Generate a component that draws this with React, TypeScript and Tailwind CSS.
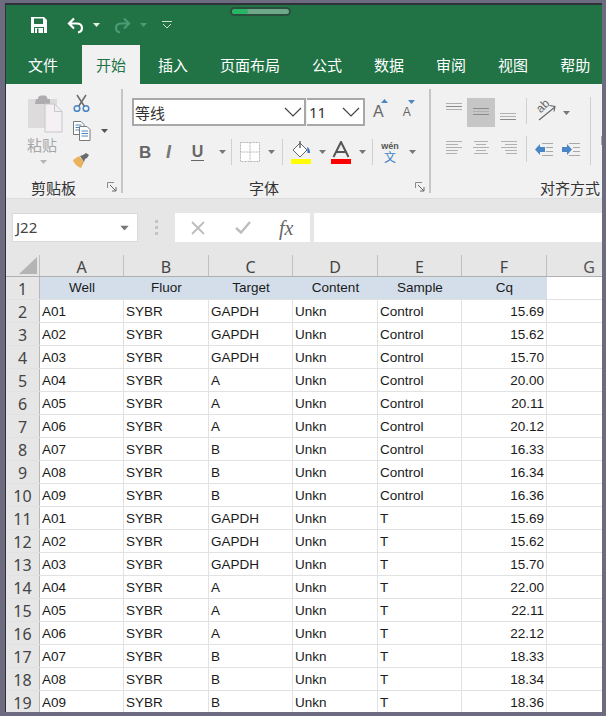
import React from "react";

const CJK = '"Noto Sans CJK SC", "Noto Sans", sans-serif';

function Caret({ c = "#5a5a5a", className = "" }: { c?: string; className?: string }) {
  return (
    <svg width="7" height="4" viewBox="0 0 7 4" className={className}>
      <path d="M0 0h7L3.5 4z" fill={c} />
    </svg>
  );
}
function Chevron() {
  return (
    <svg width="18" height="10" viewBox="0 0 18 10">
      <path d="M1 1l8 8 8-8" fill="none" stroke="#444" strokeWidth="1.2" />
    </svg>
  );
}
function Launcher() {
  return (
    <svg width="10" height="10" viewBox="0 0 10 10">
      <path d="M.5 6V.5H7" fill="none" stroke="#8a8a8a" />
      <path d="M3 3l6 6M9 5v4H5" fill="none" stroke="#666" />
    </svg>
  );
}
function Save() {
  return (
    <svg width="16" height="16" viewBox="0 0 16 16">
      <path d="M0 0h13l3 3v13H0z" fill="#fff" />
      <rect x="3" y="1.5" width="9" height="5.5" fill="#217346" />
      <rect x="3" y="10" width="10" height="6" fill="#217346" />
      <rect x="4" y="11" width="8" height="5" fill="#fff" />
      <rect x="6" y="11.5" width="1.5" height="4.5" fill="#217346" />
    </svg>
  );
}
function Undo({ c, flip }: { c: string; flip?: boolean }) {
  return (
    <svg width="17" height="17" viewBox="0 0 17 17" className={flip ? "-scale-x-100" : ""}>
      <path d="M7 1.5 2 6.5l5 5M2 6.5h7.5c3.500 0 5.500 2 5.500 4.500 0 2.400-1.600 4-4 4.500" fill="none" stroke={c} strokeWidth="2.2" />
    </svg>
  );
}
function Paste() {
  return (
    <svg width="36" height="38" viewBox="0 0 36 38">
      <path d="M1 4h29v29H1z" fill="#dedbdd" />
      <path d="M9 4h2c0-2 1-3.500 5-3.500S20 2 20.500 4H23v5H8z" fill="#aeacae" />
      <path d="M18 9h9.500l7.500 7.500V37H18z" fill="#f4f0f4" stroke="#c9c7c9" />
      <path d="M27.500 9v7.500H35" fill="none" stroke="#c9c7c9" />
    </svg>
  );
}
function Scissors() {
  return (
    <svg width="17" height="18" viewBox="0 0 17 18">
      <path d="M4 1l7.500 11.500M13 1 5.500 12.500" fill="none" stroke="#6b6b6b" strokeWidth="1.500" />
      <circle cx="4" cy="14.500" r="2.800" fill="none" stroke="#4a86c5" strokeWidth="1.500" />
      <circle cx="13" cy="14.500" r="2.800" fill="none" stroke="#4a86c5" strokeWidth="1.500" />
    </svg>
  );
}
function Copy() {
  return (
    <svg width="18" height="20" viewBox="0 0 18 20">
      <path d="M.5.5H8l3 3v10H.500z" fill="#fff" stroke="#7a7a7a" />
      <path d="M2.500 4h6M2.500 6.500h6M2.500 9h6" stroke="#4a86c5" />
      <path d="M6.500 5.500H14l3 3v11H6.500z" fill="#fff" stroke="#7a7a7a" />
      <path d="M8.500 10h6.500M8.500 12.500h6.500M8.500 15h6.500" stroke="#4a86c5" />
    </svg>
  );
}
function Brush() {
  return (
    <svg width="16" height="15" viewBox="0 0 16 15">
      <path d="M0 7l6-4 5 6-3 6C5 14 1 11 0 7z" fill="#e9b25f" />
      <path d="M7 3l3-1 3-2 3 2-2 3-2 1-1 3z" fill="#6b6b6b" />
    </svg>
  );
}
function Borders() {
  return (
    <svg width="20" height="20" viewBox="0 0 20 20">
      <path d="M.5.5h19v19H.5zM10 .5v19M.5 10h19" fill="#fff" stroke="#b4b4b4" strokeDasharray="2 1" />
    </svg>
  );
}
function Fill() {
  return (
    <svg width="20" height="23" viewBox="0 0 20 23">
      <path d="M2 9l7-7 7 7-7 7z" fill="#fff" stroke="#666" />
      <path d="M9 0v7" stroke="#666" strokeWidth="1.500" />
      <path d="M16 6c2 1 3 3 3 6h-2.500c0-2 0-3.500-.5-6z" fill="#2f6fb5" />
      <rect y="18" width="20" height="5" fill="#ffff00" />
    </svg>
  );
}
function FontColor() {
  return (
    <svg width="20" height="23" viewBox="0 0 20 23">
      <path d="M2.500 16 10 1l7.500 15M5.500 11h9" fill="none" stroke="#555" strokeWidth="2" />
      <rect y="18" width="20" height="5" fill="#ff0000" />
    </svg>
  );
}
function Lines({ w = 16, n = 3, dark = [] as number[], widths = [] as number[], align = "left" }: { w?: number; n?: number; dark?: number[]; widths?: number[]; align?: string }) {
  return (
    <svg width={w} height={n * 3 + 1} viewBox={`0 0 ${w} ${n * 3 + 1}`}>
      {Array.from({ length: n }).map((_, i) => {
        const lw = widths[i] ?? w;
        const x = align === "left" ? 0 : align === "center" ? (w - lw) / 2 : w - lw;
        return <rect key={i} x={x} y={i * 3} width={lw} height="1" fill={dark.includes(i) ? "#8a8a8a" : "#b0b0b0"} />;
      })}
    </svg>
  );
}
function Orientation() {
  return (
    <div className="relative w-[21px] h-[21px]">
      <svg width="21" height="21" viewBox="0 0 21 21">
        <path d="M3 18 19 5M13.500 3.500 19 4.500l-1 5" fill="none" stroke="#666" strokeWidth="1.100" />
      </svg>
      <span className="absolute left-[0px] top-[-2px] text-[12px] leading-none text-[#666] -rotate-45" style={{ fontFamily: '"Liberation Sans", sans-serif' }}>ab</span>
    </div>
  );
}
function Indent({ right }: { right?: boolean }) {
  return (
    <svg width="18" height="13" viewBox="0 0 18 13">
      <path d={right ? "M0 4h5V1l5 5.500-5 5.500V9H0z" : "M10 4H5V1L0 6.500 5 12V9h5z"} fill="#4a86c5" />
      <path d="M7 .5h11M11 4.500h7M11 8.500h7M7 12.500h11" stroke="#a8a8a8" />
    </svg>
  );
}

const Sep = ({ h = "h-[26px]", ml = "", mr = "" }: { h?: string; ml?: string; mr?: string }) => <div className={`w-px bg-[#d0d0d0] ${h} ${ml} ${mr}`} />;

const tabs = ["文件", "开始", "插入", "页面布局", "公式", "数据", "审阅", "视图", "帮助"];

function GroupLabel({ text, launcher, className }: { text: string; launcher?: boolean; className: string }) {
  return (
    <div className={`flex items-center h-[22px] text-[15px] text-[#333] leading-none ${className}`}>
      <span className="whitespace-nowrap">{text}</span>
      {launcher && <span className="ml-auto flex"><Launcher /></span>}
    </div>
  );
}

const headers = ["Well", "Fluor", "Target", "Content", "Sample", "Cq"];
const widths = ["w-[84px]", "w-[85px]", "w-[84px]", "w-[85px]", "w-[84px]", "w-[85px]"];
const cols = ["A", "B", "C", "D", "E", "F"];
const wells = ["A01", "A02", "A03", "A04", "A05", "A06", "A07", "A08", "A09"];
const targets = ["GAPDH", "GAPDH", "GAPDH", "A", "A", "A", "B", "B", "B"];
const cq1 = ["15.69", "15.62", "15.70", "20.00", "20.11", "20.12", "16.33", "16.34", "16.36"];
const cq2 = ["15.69", "15.62", "15.70", "22.00", "22.11", "22.12", "18.33", "18.34", "18.36"];
const rows = [
  ...wells.map((w, i) => [w, "SYBR", targets[i], "Unkn", "Control", cq1[i]]),
  ...wells.map((w, i) => [w, "SYBR", targets[i], "Unkn", "T", cq2[i]]),
];

export default function App() {
  return (
    <div className="w-[606px] h-[716px] bg-[#6c6b80] pt-[3px] pl-[5px] pr-[4px] pb-[4px] overflow-hidden" style={{ fontFamily: CJK }}>
      <div className="h-full border-l border-t-2 border-[#30303a] bg-[#e6e6e6] overflow-hidden flex flex-col">
        {/* Title bar */}
        <div className="relative h-[40px] bg-[#217346] flex items-center pl-[25px] shrink-0">
          <Save />
          <span className="ml-[20px] flex"><Undo c="#ffffff" /></span>
          <Caret c="#e8f0ea" className="ml-[9px]" />
          <span className="ml-[14px] flex"><Undo c="#4e9a74" flip /></span>
          <Caret c="#4e9a74" className="ml-[9px]" />
          <svg width="10" height="8" viewBox="0 0 10 8" className="ml-[15px]">
            <path d="M0 .5h10M1 3l4 4 4-4" fill="none" stroke="#cfe0d5" />
          </svg>
          <div className="absolute left-[224px] top-[2px] w-[61px] h-[9px] rounded-full border-2 border-[#2b4f3d] bg-[#6ea78a] overflow-hidden">
            <div className="w-[16px] h-full rounded-full bg-[#27b566]" />
          </div>
        </div>
        {/* Tabs */}
        <div className="h-[39px] bg-[#217346] flex items-stretch pl-[8px] gap-[4px] shrink-0 text-[15px] text-white">
          {tabs.map((t, i) => (
            <div key={t} className={`px-[14px] py-[2px] flex items-center whitespace-nowrap leading-none ${i === 1 ? "bg-[#f1f1f1] text-[#217346] ml-[6px] w-[60px]" : ""}`}>
              {t}
            </div>
          ))}
        </div>
        {/* Ribbon */}
        <div className="h-[115px] bg-[#f1f1f1] border-b border-[#dcdcdc] flex shrink-0 overflow-hidden">
          <div className="w-[115px] shrink-0 flex flex-col">
            <div className="h-[93px] flex">
              <div className="ml-[21px] mt-[11px] flex flex-col items-start w-[36px]">
                <Paste />
                <span className="text-[15px] leading-none text-[#a6a6a6] mt-[4px] whitespace-nowrap">粘贴</span>
                <Caret c="#b5b5b5" className="ml-[13px] mt-[8px]" />
              </div>
              <div className="ml-[10px] mt-[10px] flex flex-col items-start">
                <Scissors />
                <div className="flex items-center mt-[9px]">
                  <Copy />
                  <Caret c="#555" className="ml-[10px]" />
                </div>
                <span className="mt-[12px] flex"><Brush /></span>
              </div>
            </div>
            <GroupLabel text="剪贴板" launcher className="pl-[25px] pr-[4px]" />
          </div>
          <div className="w-[2px] bg-[#c6c6c6] my-[5px] shrink-0" />
          <div className="w-[306px] shrink-0 flex flex-col">
            <div className="h-[93px] pt-[14px] pl-[9px]">
              <div className="flex items-center h-[28px]">
                <div className="w-[174px] h-[28px] border-2 border-[#a8a8a8] bg-white flex items-center justify-between pl-[1px] pr-[2px] text-[15px] text-[#333] leading-none">
                  等线
                  <Chevron />
                </div>
                <div className="w-[58px] h-[28px] border-2 border-[#a8a8a8] border-l-0 ml-[1px] bg-white flex items-center justify-between pl-[2px] pr-[3px] text-[15px] text-[#333] leading-none">
                  <span style={{ fontFamily: '"Noto Sans", sans-serif' }}>11</span>
                  <Chevron />
                </div>
                <div className="ml-[8px] relative flex">
                  <span className="text-[16px] leading-none text-[#666]" style={{ fontFamily: '"Liberation Sans", sans-serif' }}>A</span>
                  <span className="absolute left-[8px] -top-[5px] flex"><Caret c="#4a86c5" className="rotate-180" /></span>
                </div>
                <div className="ml-[19px] relative flex">
                  <span className="text-[12px] leading-none text-[#666]" style={{ fontFamily: '"Liberation Sans", sans-serif' }}>A</span>
                  <span className="absolute left-[5px] -top-[6px] flex"><Caret c="#4a86c5" /></span>
                </div>
              </div>
              <div className="flex items-center mt-[13px] h-[26px]" style={{ fontFamily: '"Liberation Sans", sans-serif' }}>
                <span className="ml-[7px] w-[12px] text-[17px] font-bold leading-none text-[#666]">B</span>
                <span className="ml-[15px] w-[11px] text-[18px] font-bold italic leading-none text-[#777]">I</span>
                <span className="ml-[14px] w-[13px] text-[16px] font-bold leading-none text-[#666] border-b border-[#666] flex justify-center">U</span>
                <Caret className="ml-[15px]" c="#777" />
                <Sep ml="ml-[5px]" />
                <span className="ml-[8px] flex"><Borders /></span>
                <Caret className="ml-[8px]" c="#777" />
                <Sep ml="ml-[7px]" />
                <span className="ml-[8px] flex"><Fill /></span>
                <Caret className="ml-[8px]" c="#777" />
                <span className="ml-[5px] flex"><FontColor /></span>
                <Caret className="ml-[8px]" c="#777" />
                <Sep ml="ml-[6px]" />
                <div className="ml-[9px] w-[16px] flex flex-col items-center leading-none">
                  <span className="text-[9px] font-bold text-[#555] leading-[9px]">wén</span>
                  <span className="text-[12px] text-[#3f7fc4] leading-[11px]" style={{ fontFamily: CJK }}>文</span>
                </div>
                <Caret className="ml-[11px]" c="#777" />
              </div>
            </div>
            <div className="flex items-center h-[22px] text-[15px] text-[#333] leading-none pl-[126px] pr-[4px]">
              <span>字体</span>
              <span className="ml-auto flex"><Launcher /></span>
            </div>
          </div>
          <div className="w-[2px] bg-[#c6c6c6] my-[5px] shrink-0" />
          <div className="flex-1 flex flex-col min-w-0">
            <div className="h-[93px] pt-[14px] pl-[15px] flex items-start">
              <div className="w-[144px] shrink-0">
                <div className="flex items-start h-[29px]">
                  <div className="w-[17px] pt-[5px] flex"><Lines w={16} dark={[1]} /></div>
                  <div className="ml-[4px] w-[28px] h-[29px] bg-[#c6c6c6] flex items-center justify-center"><Lines w={16} dark={[0, 2]} /></div>
                  <div className="ml-[5px] w-[16px] pt-[15px] flex"><Lines w={16} dark={[2]} /></div>
                  <Sep h="h-[26px]" ml="ml-[10px]" />
                  <span className="ml-[9px] flex pt-[4px]"><Orientation /></span>
                  <Caret c="#777" className="ml-[6px] mt-[13px]" />
                </div>
                <div className="flex items-center h-[26px] mt-[9px]">
                  <Lines w={16} n={5} widths={[16, 12, 16, 12, 11]} />
                  <span className="ml-[11px] flex"><Lines w={16} n={5} widths={[14, 10, 16, 10, 14]} align="center" /></span>
                  <span className="ml-[12px] flex"><Lines w={16} n={5} widths={[16, 12, 16, 12, 11]} align="right" /></span>
                  <Sep ml="ml-[9px]" />
                  <span className="ml-[8px] flex"><Indent /></span>
                  <span className="ml-[9px] flex"><Indent right /></span>
                </div>
              </div>
              <div className="w-px h-[68px] bg-[#d0d0d0] -mt-px shrink-0" />
              <div className="ml-[10px] mt-[38px] w-[3px] h-[9px] border border-[#a8a8a8] border-r-0 shrink-0" />
            </div>
            <div className="flex items-center h-[22px] text-[15px] text-[#333] leading-none pl-[109px]">
              <span className="whitespace-nowrap">对齐方式</span>
            </div>
          </div>
        </div>
        {/* Formula bar */}
        <div className="h-[43px] pt-[14px] pl-[6px] flex shrink-0">
          <div className="w-[126px] h-[29px] bg-white border border-[#dadada] flex items-center justify-between pl-[3px] pr-[9px] text-[15px] text-[#444] leading-none" style={{ fontFamily: '"Noto Sans", sans-serif' }}>
            J22
            <Caret c="#777" className="scale-125" />
          </div>
          <div className="w-[37px] flex flex-col items-center justify-center gap-[3px]">
            <div className="w-[3px] h-[3px] bg-[#c4c4c4]" />
            <div className="w-[3px] h-[3px] bg-[#c4c4c4]" />
            <div className="w-[3px] h-[3px] bg-[#c4c4c4]" />
          </div>
          <div className="w-[135px] h-[29px] bg-white flex items-center pl-[16px]">
            <svg width="14" height="14" viewBox="0 0 14 14"><path d="M1 1l12 12M13 1 1 13" stroke="#bdbdbd" strokeWidth="1.800" /></svg>
            <svg width="16" height="13" viewBox="0 0 16 13" className="ml-[30px]"><path d="M1 7l5 4.500L15 1" fill="none" stroke="#bdbdbd" strokeWidth="2.400" /></svg>
            <span className="ml-[28px] text-[20px] italic text-[#666] leading-none" style={{ fontFamily: '"Liberation Serif", serif' }}>fx</span>
          </div>
          <div className="ml-[4px] flex-1 h-[29px] bg-white" />
        </div>
        {/* Sheet */}
        <div className="flex-1 min-h-0 overflow-hidden pt-[13px]">
          <div className="flex h-[22px] border-b border-[#b0b0b0] text-[#444] text-[16px] leading-none" style={{ fontFamily: '"Noto Sans", sans-serif' }}>
            <div className="w-[34px] shrink-0 border-r border-[#c0c0c0] flex items-end justify-end pr-[2px] pb-[2px]">
              <svg width="18" height="17" viewBox="0 0 18 17"><path d="M18 0v17H0z" fill="#b4b4b4" /></svg>
            </div>
            {cols.map((c, i) => (
              <div key={c} className={`${widths[i]} shrink-0 pt-[2px] border-r border-[#c0c0c0] flex items-center justify-center`}>{c}</div>
            ))}
            <div className="w-[84px] shrink-0 pt-[2px] flex items-center justify-center text-[#555]">G</div>
          </div>
          <div style={{ fontFamily: '"Liberation Sans", sans-serif' }} className="text-[13.5px] text-[#1a1a1a] leading-none">
            <div className="flex h-[23px] border-b border-[#e0e0e0]">
              <div className="w-[34px] shrink-0 pt-[1px] bg-[#e6e6e6] border-r border-[#b8b8b8] flex items-center justify-center text-[#444] text-[16px]" style={{ fontFamily: '"Noto Sans", sans-serif' }}>1</div>
              {headers.map((h, i) => (
                <div key={h} className={`${widths[i]} shrink-0 bg-[#d3deea] flex items-center justify-center`}>{h}</div>
              ))}
              <div className="flex-1 bg-white" />
            </div>
            {rows.map((r, ri) => (
              <div key={ri} className="flex h-[23px] border-b border-[#e2e2e2]">
                <div className="w-[34px] shrink-0 pt-[1px] bg-[#e6e6e6] border-r border-[#b8b8b8] flex items-center justify-center text-[#444] text-[16px]" style={{ fontFamily: '"Noto Sans", sans-serif' }}>{ri + 2}</div>
                {r.map((v, i) => (
                  <div key={i} className={`${widths[i]} shrink-0 pt-[1px] bg-white border-r border-[#e2e2e2] flex items-center ${i === 5 ? "justify-end pr-[2px]" : "pl-[2px]"}`}>{v}</div>
                ))}
                <div className="flex-1 bg-white" />
              </div>
            ))}
          </div>
        </div>
      </div>
    </div>
  );
}
